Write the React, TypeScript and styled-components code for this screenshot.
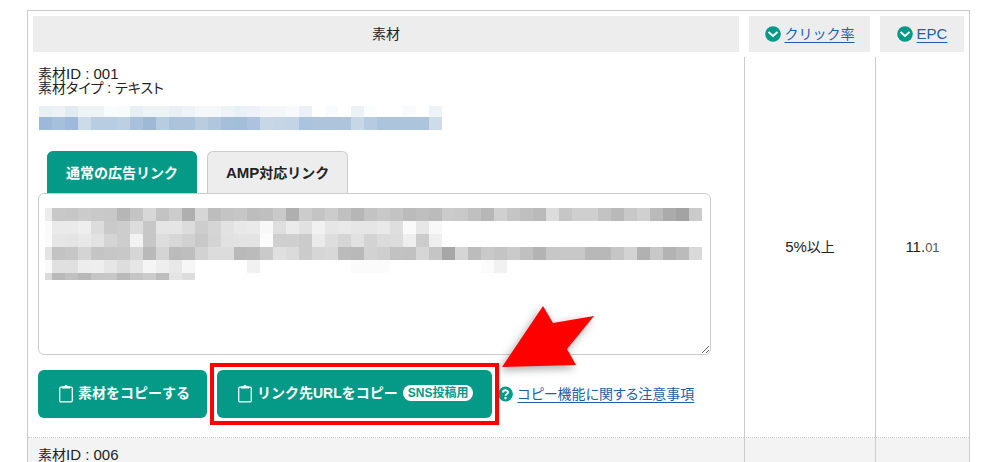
import React from "react";
import styled, { createGlobalStyle, css } from "styled-components";

const GREEN = "#049a87";
const LINE = "#cccccc";
const LINK = "#1d5fa8";

const GlobalStyle = createGlobalStyle`
  *, *::before, *::after { box-sizing: border-box; }
  body {
    margin: 0;
    background: #fff;
    color: #222;
    font-family: "Liberation Sans", "Noto Sans CJK JP", sans-serif;
    font-size: 14px;
    line-height: 14px;
  }
  button, textarea { font: inherit; }
`;

const Page = styled.main`
  padding: 10px 30px 0 27px;
`;

const Table = styled.table`
  width: 100%;
  table-layout: fixed;
  border: 1px solid ${LINE};
  border-bottom: 0;
  border-collapse: separate;
  border-spacing: 0;
`;

const HeadCell = styled.th<{ $width?: number }>`
  width: ${(p) => (p.$width ? `${p.$width}px` : "auto")};
  padding: 5px;
  font-weight: 400;
`;

const HeadLabel = styled.div`
  display: flex;
  align-items: center;
  justify-content: center;
  gap: 4px;
  height: 36px;
  background: #ededed;
`;

const TextLink = styled.a<{ $tight?: boolean }>`
  color: ${LINK};
  text-decoration: underline;
  text-decoration-skip-ink: none;
  text-underline-offset: 3px;
  font-feature-settings: ${(p) => (p.$tight ? '"palt"' : "normal")};
  white-space: nowrap;
`;

const Latin = styled.span`
  font-size: 15px;
`;

const Row = styled.tr<{ $shaded?: boolean }>`
  background: ${(p) => (p.$shaded ? "#f3f3f3" : "transparent")};
`;

const cellLine = css`
  border-bottom: 1px dotted ${LINE};
`;

const MaterialCell = styled.td`
  ${cellLine}
  padding: 10px 33px 19px 10px;
  vertical-align: top;
`;

const ValueCell = styled.td`
  ${cellLine}
  border-left: 1px solid ${LINE};
  padding: 0;
  text-align: center;
`;

const Fraction = styled.small`
  font-size: 13px;
  color: #555;
`;

const Info = styled.p`
  margin: 0;
  height: 14px;
  font-feature-settings: "palt";
`;

const Preview = styled.div`
  margin-top: 11px;
  padding-left: 1px;
  svg { display: block; }
`;

const Tabs = styled.div`
  display: flex;
  gap: 10px;
  margin-top: 21px;
  padding-left: 9px;
`;

const Tab = styled.button<{ $active?: boolean }>`
  height: 42px;
  padding: 0 18px;
  border: 1px solid ${(p) => (p.$active ? GREEN : LINE)};
  border-bottom: 0;
  border-radius: 6px 6px 0 0;
  background: ${(p) => (p.$active ? GREEN : "#ededed")};
  color: ${(p) => (p.$active ? "#fff" : "#222")};
  font-weight: 700;
  white-space: nowrap;
`;

const CodeBox = styled.div`
  position: relative;
`;

const CodeArea = styled.textarea`
  display: block;
  width: 100%;
  height: 162px;
  border: 1px solid ${LINE};
  border-radius: 6px;
  background: #fff;
  outline: none;
`;

const CodeMosaic = styled.div`
  position: absolute;
  top: 15px;
  left: 7px;
  pointer-events: none;
  svg { display: block; }
`;

const Actions = styled.div`
  display: flex;
  align-items: center;
  margin-top: 15px;
`;

const CopyButton = styled.button`
  display: flex;
  align-items: center;
  gap: 5px;
  height: 48px;
  padding: 0 17px 2px 21px;
  border: 0;
  border-radius: 6px;
  background: ${GREEN};
  color: #fff;
  font-weight: 700;
  white-space: nowrap;
`;

const Badge = styled.span`
  margin-right: 2px;
  padding: 1px 5px;
  border-radius: 8px;
  background: #fff;
  color: ${GREEN};
  font-size: 12px;
`;

const Highlighted = styled.div`
  position: relative;
  margin: 0 6px 0 10px;
`;

const Frame = styled.div`
  position: absolute;
  inset: -7px;
  border: 4px solid #f00;
  pointer-events: none;
`;

const Pointer = styled.svg`
  position: absolute;
  left: 100%;
  bottom: 100%;
  margin: 0 0 2px 10px;
  overflow: visible;
  pointer-events: none;
  filter: drop-shadow(-2px 3px 4px rgba(0, 0, 0, 0.35));
`;

const Help = styled.div`
  display: flex;
  align-items: center;
  gap: 4px;
`;

type Cell = { width: number; fill: string };

const Mosaic = ({ rows }: { rows: { height: number; cells: Cell[] }[] }) => {
  const width = Math.max(...rows.map((r) => r.cells.reduce((s, c) => s + c.width, 0)));
  const height = rows.reduce((s, r) => s + r.height, 0);
  let y = 0;
  return (
    <svg width={width} height={height} shapeRendering="crispEdges" aria-hidden="true">
      {rows.map((row, i) => {
        const top = y;
        y += row.height;
        let x = 0;
        return (
          <g key={i}>
            {row.cells.map((cell, j) => {
              const left = x;
              x += cell.width;
              return <rect key={j} x={left} y={top} width={cell.width} height={row.height} fill={cell.fill} />;
            })}
          </g>
        );
      })}
    </svg>
  );
};

const greys = (height: number, text: string) => ({
  height,
  cells: text.split(" ").map((v, i) => ({ width: i === 0 ? 7 : 13, fill: `#${v}${v}${v}` })),
});

const blues = (height: number, text: string) => ({
  height,
  cells: text.split(" ").map((v) => ({ width: 13, fill: `#${v}` })),
});

const CODE = [
  greys(13, "ec c8 c6 cb c9 c8 b6 c4 d7 c3 cc af d6 bd c4 c6 bd bf c9 af cc c4 cc c0 b6 c3 c8 c3 bb bf bb cb c9 c0 b7 d0 c5 bf ba dc c6 cf cf c3 b9 c8 d0 ba ab a3 cb"),
  greys(13, "fa ea ea ee dc ca cd dc c7 e5 e5 dc cd d5 e2 e8 ea f8 de eb e1 f1 e6 e9 e6 e6 e9 de fa e7 f8"),
  greys(13, "fb e6 e4 e8 e2 d4 cd f2 c7 dd d7 d1 c8 d4 e1 e3 e3 fb cf cf cb ea dd d5 e1 d3 db dc ee cc ef"),
  greys(13, "e4 c3 c6 d4 c4 c7 c8 d6 b9 d4 bb be d2 dc dc b9 bb ca e0 db cb d6 d8 bb b9 d2 ce c2 c1 d6 c5 a7 d5 bc c9 c4 ca c0 b3 c7 c8 c8 b8 b8 c6 d3 b1 c8 b3 bb d9"),
  greys(13, "fa e0 e0 ed ee e6 dd e6 f5 ee e8 f6 ff ff ff ff f1 ff ff ff ff ff ff ff fb fb fb ff ff ff ff ff ff ff fb f1"),
  greys(7, "da b9 c1 b8 c5 c7 b9 c5 cb bd e4 dd"),
];

const LINK_TEXT = [
  blues(11, "e8f0f4 ecf2f4 e2ebf2 eef3f6 eef3f6 f9fcfd f8fbfc e7eff4 eef3f6 eef3f6 e9eff5 eef3f7 f4f8fa f4f8fa eef3f7 e9f0f7 eef2f8 f4f6f9 f4f6fa f8f9fb ebf1f6 ffffff f9fafc ffffff edf2f7 fcfdfe ffffff ffffff f9fafc ffffff edf3f7"),
  blues(13, "9db8d8 a6bfdb 9fb9da cbdbe7 b8cde1 b9cde2 bccfe3 a9c1da 9fb8d6 b6cce0 abc3db adc3db bacde0 b0c6dc a5bfda a3bed9 adc2de c7d7e6 c5d5e6 c3d4e6 abc3dc adc4dc aec4dd adc4dd c8d7e6 b6cbe1 adc4dd adc4dd adc4dd adc4dd cedcea"),
];

const SortIcon = () => (
  <svg width="16" height="16" viewBox="0 0 16 16" aria-hidden="true">
    <circle cx="8" cy="8" r="7.8" fill={GREEN} />
    <path d="M3.5 6 8 10 12.5 6" fill="none" stroke="#fff" strokeWidth="2" />
  </svg>
);

const HelpIcon = () => (
  <svg width="15" height="16" viewBox="0 0 15 16" aria-hidden="true">
    <circle cx="7.5" cy="8" r="7.4" fill={GREEN} />
    <path d="M5 6.5C5 3.5 10 3.6 10 6.3C10 8 7.6 8 7.6 9.8" fill="none" stroke="#fff" strokeWidth="1.9" />
    <circle cx="7.5" cy="12" r="1.2" fill="#fff" />
  </svg>
);

const ClipboardIcon = () => (
  <svg width="14" height="20" viewBox="0 0 14 20" aria-hidden="true">
    <rect x="0.7" y="4.2" width="12.6" height="14.6" rx="1.2" fill="none" stroke="#fff" strokeWidth="1.3" />
    <path d="M3 3.5h2.3a1.7 1.5 0 0 1 3.4 0H11v2H3z" fill="#fff" />
  </svg>
);

export default function App() {
  return (
    <>
      <GlobalStyle />
      <Page>
        <Table>
          <thead>
            <tr>
              <HeadCell><HeadLabel>素材</HeadLabel></HeadCell>
              <HeadCell $width={131}>
                <HeadLabel><SortIcon /><TextLink href="#rate">クリック率</TextLink></HeadLabel>
              </HeadCell>
              <HeadCell $width={94}>
                <HeadLabel><SortIcon /><TextLink href="#epc"><Latin>EPC</Latin></TextLink></HeadLabel>
              </HeadCell>
            </tr>
          </thead>
          <tbody>
            <Row>
              <MaterialCell>
                <Info>素材<Latin>ID : 001</Latin></Info>
                <Info>素材タイプ : テキスト</Info>
                <Preview><Mosaic rows={LINK_TEXT} /></Preview>
                <Tabs>
                  <Tab type="button" $active>通常の広告リンク</Tab>
                  <Tab type="button"><Latin>AMP</Latin>対応リンク</Tab>
                </Tabs>
                <CodeBox>
                  <CodeArea aria-label="広告リンク" readOnly />
                  <CodeMosaic><Mosaic rows={CODE} /></CodeMosaic>
                </CodeBox>
                <Actions>
                  <CopyButton type="button"><ClipboardIcon />素材をコピーする</CopyButton>
                  <Highlighted>
                    <CopyButton type="button">
                      <ClipboardIcon />リンク先URLをコピー<Badge>SNS投稿用</Badge>
                    </CopyButton>
                    <Frame />
                    <Pointer width="92" height="62" viewBox="0 0 92 62">
                      <path d="M41 0 51 17 92 10 65 43 74 59 0 61Z" fill="#f00" />
                    </Pointer>
                  </Highlighted>
                  <Help><HelpIcon /><TextLink $tight href="#notes">コピー機能に関する注意事項</TextLink></Help>
                </Actions>
              </MaterialCell>
              <ValueCell><Latin>5%</Latin>以上</ValueCell>
              <ValueCell><Latin>11.</Latin><Fraction>01</Fraction></ValueCell>
            </Row>
            <Row $shaded>
              <MaterialCell><Info>素材<Latin>ID : 006</Latin></Info></MaterialCell>
              <ValueCell />
              <ValueCell />
            </Row>
          </tbody>
        </Table>
      </Page>
    </>
  );
}
